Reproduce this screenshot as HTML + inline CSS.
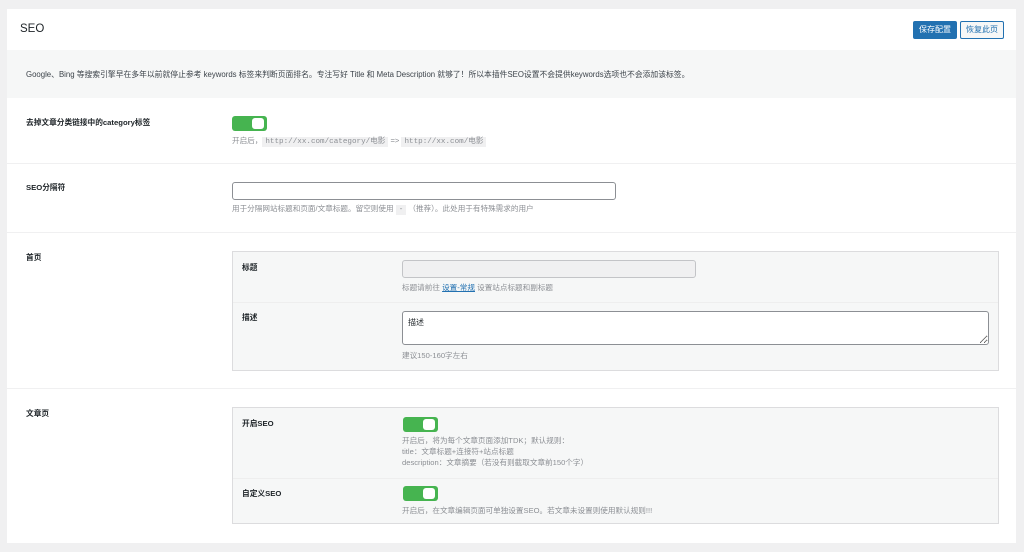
<!DOCTYPE html>
<html><head><meta charset="utf-8"><style>
*{box-sizing:border-box;margin:0;padding:0}
body{width:1024px;height:552px;background:#f0f0f1;font-family:"Liberation Sans","Noto Sans CJK SC",sans-serif;position:relative;overflow:hidden;color:#1d2327}
.a{position:absolute}
.card{left:7px;top:9px;width:1009px;height:534px;background:#fff}
.lbl{font-size:7.7px;font-weight:bold;color:#1d2327}
.desc{font-size:7.6px;color:#8c8f94;line-height:11px;white-space:nowrap}
.tog{width:35px;height:15px;background:#46b450;border-radius:3px}
.tog::after{content:"";position:absolute;right:3px;top:2px;width:12px;height:11px;background:#fff;border-radius:3px}
.code{background:#f0f0f1;font-family:"Liberation Mono","Noto Sans CJK SC",monospace;padding:1px 3px}
.hr{height:1px;background:#f0f0f1;left:7px;width:1009px}
.box{background:#f6f7f7;border:1px solid #dcdcde}
input,textarea{position:absolute;border:1px solid #8c8f94;border-radius:3px;background:#fff}
</style></head><body>
<div class="a card"></div>
<div class="a" style="left:20px;top:23px;font-size:11.5px">SEO</div>
<div class="a" style="left:913px;top:21px;width:44px;height:18px;background:#2271b1;color:#fff;border-radius:2px;font-size:8px;line-height:18px;text-align:center">保存配置</div>
<div class="a" style="left:960px;top:21px;width:44px;height:18px;background:#f6f7f7;color:#2271b1;border:1px solid #2271b1;border-radius:2px;font-size:8px;line-height:16px;text-align:center">恢复此页</div>
<div class="a" style="left:7px;top:50px;width:1009px;height:48px;background:#f6f7f7"></div>
<div class="a" style="left:26px;top:69px;font-size:7.8px;color:#3c434a;white-space:nowrap">Google、Bing 等搜索引擎早在多年以前就停止参考 keywords 标签来判断页面排名。专注写好 Title 和 Meta Description 就够了！所以本插件SEO设置不会提供keywords选项也不会添加该标签。</div>

<div class="a lbl" style="left:26px;top:117px">去掉文章分类链接中的category标签</div>
<div class="a tog" style="left:232px;top:116px"></div>
<div class="a desc" style="left:232px;top:135px">开启后，<span class="code">http://xx.com/category/电影</span> =&gt; <span class="code">http://xx.com/电影</span></div>
<div class="a hr" style="top:163px"></div>

<div class="a lbl" style="left:26px;top:182px">SEO分隔符</div>
<input style="left:232px;top:182px;width:384px;height:18px">
<div class="a desc" style="left:232px;top:203px">用于分隔网站标题和页面/文章标题。留空则使用 <span class="code">-</span> （推荐）。此处用于有特殊需求的用户</div>
<div class="a hr" style="top:232px"></div>

<div class="a lbl" style="left:26px;top:252px">首页</div>
<div class="a box" style="left:232px;top:251px;width:767px;height:120px"></div>
<div class="a" style="left:233px;top:302px;width:765px;height:1px;background:#eee"></div>
<div class="a lbl" style="left:242px;top:262px">标题</div>
<input style="left:402px;top:260px;width:294px;height:18px;background:#f0f0f1;border-color:#c3c4c7">
<div class="a desc" style="left:402px;top:282px">标题请前往 <span style="color:#2271b1;text-decoration:underline">设置-常规</span> 设置站点标题和副标题</div>
<div class="a lbl" style="left:242px;top:312px">描述</div>
<textarea style="left:402px;top:311px;width:587px;height:34px;font-size:8px;padding:5px;font-family:inherit;color:#1d2327">描述</textarea>
<div class="a desc" style="left:402px;top:350px">建议150-160字左右</div>
<div class="a hr" style="top:388px"></div>

<div class="a lbl" style="left:26px;top:408px">文章页</div>
<div class="a box" style="left:232px;top:407px;width:767px;height:117px"></div>
<div class="a" style="left:233px;top:478px;width:765px;height:1px;background:#eee"></div>
<div class="a lbl" style="left:242px;top:418px">开启SEO</div>
<div class="a tog" style="left:403px;top:417px"></div>
<div class="a desc" style="left:402px;top:435px">开启后，将为每个文章页面添加TDK；默认规则：<br>title：文章标题+连接符+站点标题<br>description：文章摘要（若没有则截取文章前150个字）</div>
<div class="a lbl" style="left:242px;top:488px">自定义SEO</div>
<div class="a tog" style="left:403px;top:486px"></div>
<div class="a desc" style="left:402px;top:505px">开启后，在文章编辑页面可单独设置SEO。若文章未设置则使用默认规则!!!</div>
</body></html>
